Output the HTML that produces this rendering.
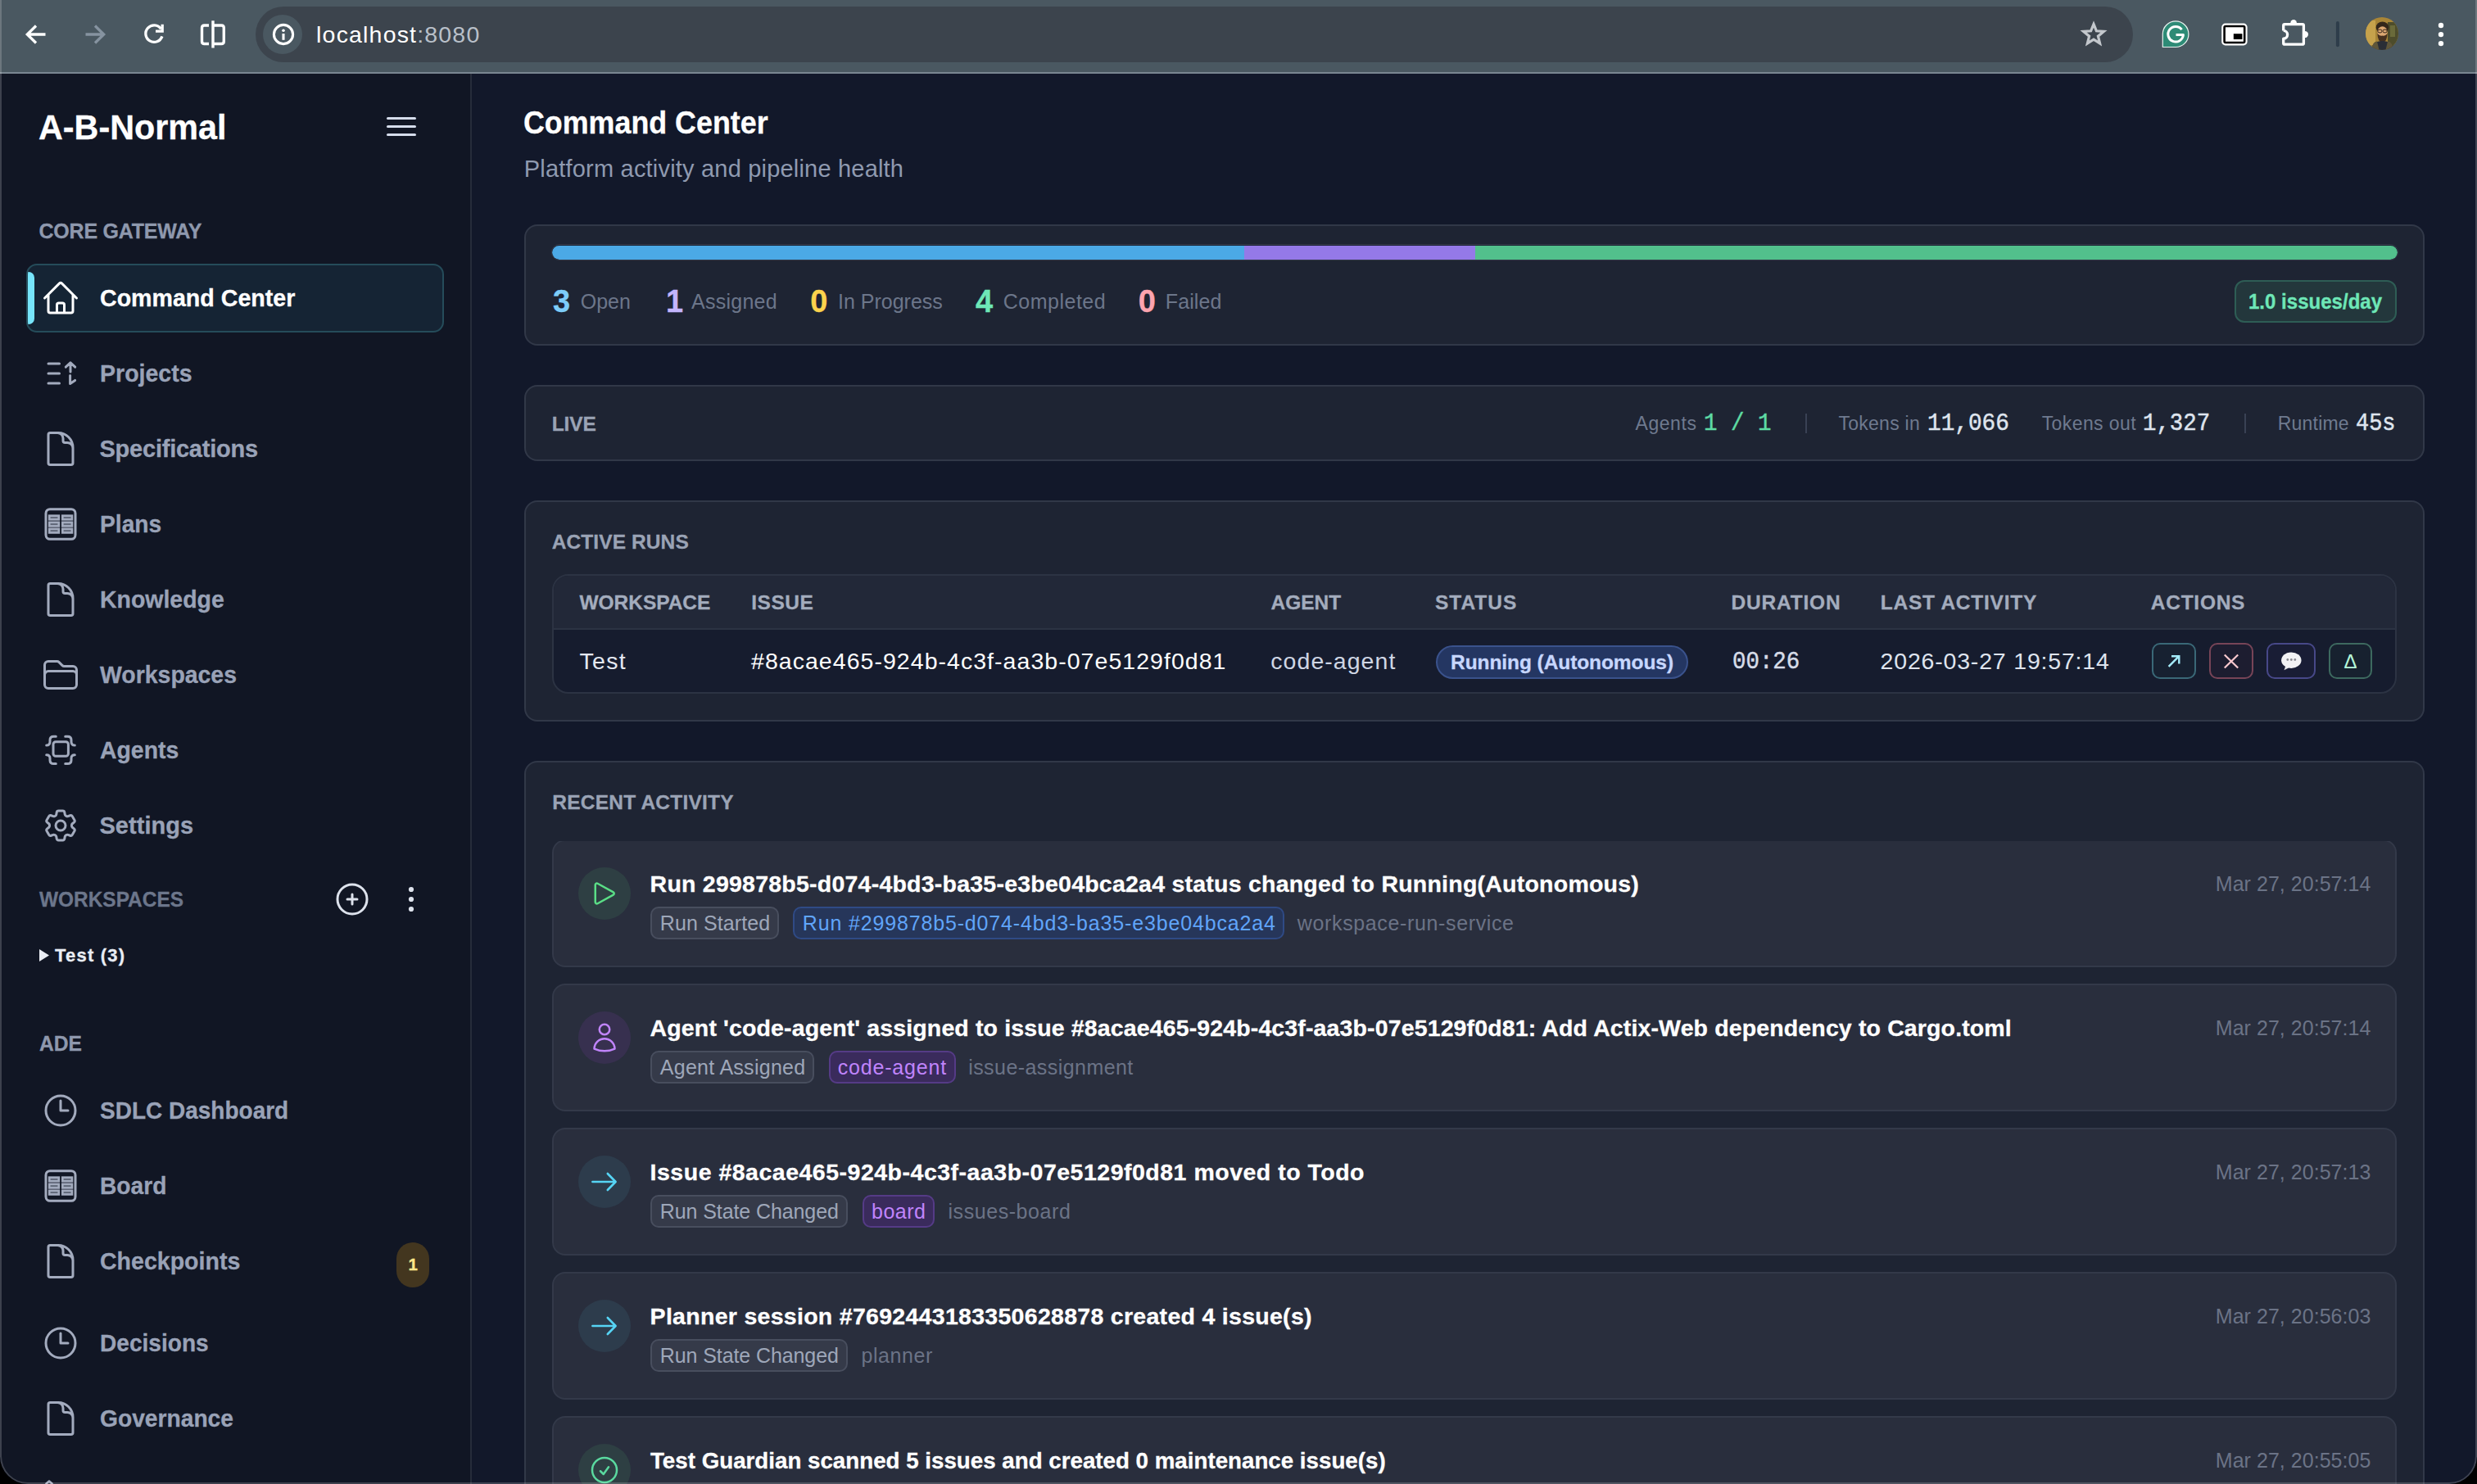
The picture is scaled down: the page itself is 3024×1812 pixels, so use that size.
<!DOCTYPE html>
<html><head><meta charset="utf-8"><title>Command Center</title>
<style>
*{box-sizing:border-box;margin:0;padding:0}
html,body{width:3024px;height:1812px;overflow:hidden;background:#000}
body{font-family:"Liberation Sans",sans-serif}
#w{position:absolute;left:0;top:0;width:3024px;height:1812px;overflow:hidden;background:#12182a;border-radius:0 0 34px 34px}
.a{position:absolute}
.t{position:absolute;white-space:pre;line-height:1}
.card{position:absolute;background:#1e2433;border:2px solid #313848;border-radius:16px}
.item{position:absolute;left:674px;width:2252px;height:156px;background:#292e3d;border:2px solid #333949;border-radius:16px}
.tag{position:absolute;height:40px;border-radius:10px;border:2px solid #484e5e;background:#353a49}
.ic{position:absolute;width:64px;height:64px;border-radius:32px}
svg{position:absolute;overflow:visible}
</style></head><body><div id="w">
<div class="a" style="left:0;top:0;width:3024px;height:88px;background:#4a5861"></div>
<div class="a" style="left:0;top:88px;width:3024px;height:2px;background:#7a8691"></div>
<div class="a" style="left:312px;top:8px;width:2292px;height:68px;border-radius:34px;background:#3c444d"></div>
<div class="a" style="left:321px;top:18px;width:48px;height:48px;border-radius:24px;background:#4a5861"></div>
<div class="a" style="left:0;top:90px;width:575px;height:1722px;background:#111624"></div>
<div class="a" style="left:574px;top:90px;width:2px;height:1722px;background:#262c3a"></div>
<div class="a" style="left:472px;top:142.5px;width:36px;height:3px;border-radius:2px;background:#d5dceb"></div>
<div class="a" style="left:472px;top:152.5px;width:36px;height:3px;border-radius:2px;background:#d5dceb"></div>
<div class="a" style="left:472px;top:163.0px;width:36px;height:3px;border-radius:2px;background:#d5dceb"></div>
<div class="a" style="left:32px;top:322px;width:510px;height:84px;border-radius:13px;background:#152434;border:2px solid #254c5a;overflow:hidden"><div class="a" style="left:0;top:8px;width:8px;height:64px;background:#76e4fa;border-radius:0 7px 7px 0"></div></div>
<svg style="left:48px;top:1159px" width="12" height="15"><path d="M0 0 L12 7.5 L0 15Z" fill="#e9edf4"/></svg>
<div class="a" style="left:484px;top:1516.5px;width:40px;height:55.5px;border-radius:20px;background:#43361f"></div>
<div class="card" style="left:640px;top:274px;width:2320px;height:148px"></div>
<div class="a" style="left:672.5px;top:298px;width:2255px;height:20px;border-radius:10px;background:#1a2030;overflow:hidden;border:1px solid #353a49"><div class="a" style="left:0;top:0.5px;width:2253px;height:17px;border-radius:8.5px;overflow:hidden"><div class="a" style="left:0;top:0;width:845.5px;height:17px;background:#4ba9e6"></div><div class="a" style="left:845.5px;top:0;width:281.5px;height:17px;background:#9479e8"></div><div class="a" style="left:1127px;top:0;width:1126px;height:17px;background:#52c08c"></div></div></div>
<div class="a" style="left:2728px;top:342px;width:198px;height:52px;border-radius:12px;background:#23373c;border:2px solid #2e5d55"></div>
<div class="card" style="left:640px;top:470px;width:2320px;height:93px"></div>
<div class="a" style="left:2203.5px;top:505px;width:2px;height:24px;background:#394154"></div>
<div class="a" style="left:2739.5px;top:505px;width:2px;height:24px;background:#394154"></div>
<div class="card" style="left:640px;top:611px;width:2320px;height:270px"></div>
<div class="a" style="left:674px;top:701px;width:2252px;height:146px;border-radius:20px;border:2px solid #2c3343;background:#161c2e;overflow:hidden"><div class="a" style="left:0;top:0;width:2252px;height:66px;background:#222838;border-bottom:2px solid #2c3343"></div></div>
<div class="a" style="left:1753px;top:787.5px;width:308px;height:41px;border-radius:20.5px;background:#243662;border:2px solid #3a528c"></div>
<div class="a" style="left:2627px;top:785px;width:54px;height:44px;border-radius:10px;border:2px solid #3a6877;background:#172131"></div>
<div class="a" style="left:2697px;top:785px;width:54px;height:44px;border-radius:10px;border:2px solid #774457;background:#1d1d30"></div>
<div class="a" style="left:2767px;top:785px;width:60px;height:44px;border-radius:10px;border:2px solid #474888;background:#191d35"></div>
<div class="a" style="left:2843px;top:785px;width:53px;height:44px;border-radius:10px;border:2px solid #3d695f;background:#17212f"></div>
<div class="card" style="left:640px;top:929px;width:2320px;height:1000px"></div>
<div class="item" style="top:1025.0px"></div>
<div class="ic" style="left:706px;top:1059.0px;background:#2e3f43"></div>
<div class="tag" style="left:794.4px;top:1107.3px;width:157.0px;background:#353a49;border-color:#484e5e"></div>
<div class="tag" style="left:968.4px;top:1107.3px;width:599.8px;background:#26365a;border-color:#2f4a85"></div>
<div class="a" style="left:674px;top:1020px;width:2252px;height:7px;background:#1e2433"></div>
<div class="item" style="top:1201.0px"></div>
<div class="ic" style="left:706px;top:1235.0px;background:#37304f"></div>
<div class="tag" style="left:794.4px;top:1283.3px;width:200.1px;background:#353a49;border-color:#484e5e"></div>
<div class="tag" style="left:1011.5px;top:1283.3px;width:155.0px;background:#3a2b5c;border-color:#553b86"></div>
<div class="item" style="top:1377.0px"></div>
<div class="ic" style="left:706px;top:1411.0px;background:#2d3c4c"></div>
<div class="tag" style="left:794.4px;top:1459.3px;width:240.8px;background:#353a49;border-color:#484e5e"></div>
<div class="tag" style="left:1052.7px;top:1459.3px;width:88.6px;background:#3a2b5c;border-color:#553b86"></div>
<div class="item" style="top:1553.0px"></div>
<div class="ic" style="left:706px;top:1587.0px;background:#2d3c4c"></div>
<div class="tag" style="left:794.4px;top:1635.3px;width:240.8px;background:#353a49;border-color:#484e5e"></div>
<div class="item" style="top:1729.0px"></div>
<div class="ic" style="left:706px;top:1763.0px;background:#2e3f43"></div>
<svg style="left:50.0px;top:340.0px" width="48" height="48" viewBox="0 0 24 24" fill="none" stroke="#ffffff" stroke-width="1.5" stroke-linecap="round" stroke-linejoin="round"><path d="m2.25 12 8.954-8.955c.44-.439 1.152-.439 1.591 0L21.75 12M4.5 9.75v10.125c0 .621.504 1.125 1.125 1.125H9.75v-4.875c0-.621.504-1.125 1.125-1.125h2.25c.621 0 1.125.504 1.125 1.125V21h4.125c.621 0 1.125-.504 1.125-1.125V9.75M8.25 21h8.25"/></svg>
<svg style="left:0;top:0" width="3024" height="1812" viewBox="0 0 3024 1812" fill="none" stroke-linecap="round" stroke-linejoin="round" ><path d="M59 444H72.5M59 456.1H72.5M59 468.1H72.5M86 454V443.3M80.3 448.2L86 442.8L91.7 448.2M85.6 458.5V468.6L91.6 464.4" stroke="#a3abbe" stroke-width="3"/></svg>
<svg style="left:50.0px;top:524.0px" width="48" height="48" viewBox="0 0 24 24" fill="none" stroke="#a3abbe" stroke-width="1.5" stroke-linecap="round" stroke-linejoin="round"><path d="M19.5 14.25v-2.625a3.375 3.375 0 0 0-3.375-3.375h-1.5A1.125 1.125 0 0 1 13.5 7.125v-1.5a3.375 3.375 0 0 0-3.375-3.375H8.25m2.25 0H5.625c-.621 0-1.125.504-1.125 1.125v17.25c0 .621.504 1.125 1.125 1.125h12.75c.621 0 1.125-.504 1.125-1.125V11.25a9 9 0 0 0-9-9Z"/></svg>
<svg style="left:0;top:0" width="3024" height="1812" viewBox="0 0 3024 1812" fill="none" stroke-linecap="round" stroke-linejoin="round" ><rect x="56" y="621.7" width="36" height="36.6" rx="5" stroke="#a3abbe" stroke-width="3"/><rect x="60.2" y="629.7" width="11.6" height="4.6" fill="#5f6677" stroke="#a3abbe" stroke-width="2.7" stroke-linejoin="miter"/><rect x="76.3" y="629.7" width="11.6" height="4.6" fill="#5f6677" stroke="#a3abbe" stroke-width="2.7" stroke-linejoin="miter"/><rect x="60.2" y="637.8" width="11.6" height="4.6" fill="#5f6677" stroke="#a3abbe" stroke-width="2.7" stroke-linejoin="miter"/><rect x="76.3" y="637.8" width="11.6" height="4.6" fill="#5f6677" stroke="#a3abbe" stroke-width="2.7" stroke-linejoin="miter"/><rect x="60.2" y="645.8" width="11.6" height="4.6" fill="#5f6677" stroke="#a3abbe" stroke-width="2.7" stroke-linejoin="miter"/><rect x="76.3" y="645.8" width="11.6" height="4.6" fill="#5f6677" stroke="#a3abbe" stroke-width="2.7" stroke-linejoin="miter"/></svg>
<svg style="left:50.0px;top:708.0px" width="48" height="48" viewBox="0 0 24 24" fill="none" stroke="#a3abbe" stroke-width="1.5" stroke-linecap="round" stroke-linejoin="round"><path d="M19.5 14.25v-2.625a3.375 3.375 0 0 0-3.375-3.375h-1.5A1.125 1.125 0 0 1 13.5 7.125v-1.5a3.375 3.375 0 0 0-3.375-3.375H8.25m2.25 0H5.625c-.621 0-1.125.504-1.125 1.125v17.25c0 .621.504 1.125 1.125 1.125h12.75c.621 0 1.125-.504 1.125-1.125V11.25a9 9 0 0 0-9-9Z"/></svg>
<svg style="left:50.0px;top:800.0px" width="48" height="48" viewBox="0 0 24 24" fill="none" stroke="#a3abbe" stroke-width="1.5" stroke-linecap="round" stroke-linejoin="round"><path d="M2.25 12.75V12A2.25 2.25 0 0 1 4.5 9.75h15A2.25 2.25 0 0 1 21.75 12v.75m-8.69-6.44-2.12-2.12a1.5 1.5 0 0 0-1.061-.44H4.5A2.25 2.25 0 0 0 2.25 6v12a2.25 2.25 0 0 0 2.25 2.25h15A2.25 2.25 0 0 0 21.75 18V9a2.25 2.25 0 0 0-2.25-2.25h-5.379a1.5 1.5 0 0 1-1.06-.44Z"/></svg>
<svg style="left:0;top:0" width="3024" height="1812" viewBox="0 0 3024 1812" fill="none" stroke-linecap="round" stroke-linejoin="round" ><g transform="translate(0 0.0)" stroke="#a3abbe" stroke-width="3"><rect x="65" y="905.7" width="18.4" height="17.5" rx="3"/><path d="M68.3 899.2H65.5Q61 899.2 61 903.5V905.7Q61 910 56.7 910M79.7 899.2H82.5Q87 899.2 87 903.5V905.7Q87 910 91.3 910M68.3 932.6H65.5Q61 932.6 61 928.3V926.1Q61 921.8 56.7 921.8M79.7 932.6H82.5Q87 932.6 87 928.3V926.1Q87 921.8 91.3 921.8"/></g></svg>
<svg style="left:50.0px;top:984.0px" width="48" height="48" viewBox="0 0 24 24" fill="none" stroke="#a3abbe" stroke-width="1.5" stroke-linecap="round" stroke-linejoin="round"><path d="M9.594 3.94c.09-.542.56-.94 1.11-.94h2.593c.55 0 1.02.398 1.11.94l.213 1.281c.063.374.313.686.645.87.074.04.147.083.22.127.325.196.72.257 1.075.124l1.217-.456a1.125 1.125 0 0 1 1.37.49l1.296 2.247a1.125 1.125 0 0 1-.26 1.431l-1.003.827c-.293.241-.438.613-.43.992a7.723 7.723 0 0 1 0 .255c-.008.378.137.75.43.991l1.004.827c.424.35.534.955.26 1.43l-1.298 2.247a1.125 1.125 0 0 1-1.369.491l-1.217-.456c-.355-.133-.75-.072-1.076.124a6.47 6.47 0 0 1-.22.128c-.331.183-.581.495-.644.869l-.213 1.281c-.09.543-.56.94-1.11.94h-2.594c-.55 0-1.019-.398-1.11-.94l-.213-1.281c-.062-.374-.312-.686-.644-.87a6.52 6.52 0 0 1-.22-.127c-.325-.196-.72-.257-1.076-.124l-1.217.456a1.125 1.125 0 0 1-1.369-.49l-1.297-2.247a1.125 1.125 0 0 1 .26-1.431l1.004-.827c.292-.24.437-.613.43-.991a6.932 6.932 0 0 1 0-.255c.007-.38-.138-.751-.43-.992l-1.004-.827a1.125 1.125 0 0 1-.26-1.43l1.297-2.247a1.125 1.125 0 0 1 1.37-.491l1.216.456c.356.133.751.072 1.076-.124.072-.044.146-.086.22-.128.332-.183.582-.495.644-.869l.214-1.28ZM15 12a3 3 0 1 1-6 0 3 3 0 0 1 6 0Z"/></svg>
<svg style="left:406.0px;top:1074.0px" width="48" height="48" viewBox="0 0 24 24" fill="none" stroke="#dde2ec" stroke-width="1.5" stroke-linecap="round" stroke-linejoin="round"><path d="M12 9v6m3-3H9m12 0a9 9 0 1 1-18 0 9 9 0 0 1 18 0Z"/></svg>
<svg style="left:0;top:0" width="3024" height="1812" viewBox="0 0 3024 1812" fill="none" stroke-linecap="round" stroke-linejoin="round" ><circle cx="502" cy="1086" r="3.1" fill="#dde2ec"/><circle cx="502" cy="1098" r="3.1" fill="#dde2ec"/><circle cx="502" cy="1110" r="3.1" fill="#dde2ec"/></svg>
<svg style="left:50.0px;top:1332.0px" width="48" height="48" viewBox="0 0 24 24" fill="none" stroke="#a3abbe" stroke-width="1.5" stroke-linecap="round" stroke-linejoin="round"><path d="M12 6v6h4.5m4.5 0a9 9 0 1 1-18 0 9 9 0 0 1 18 0Z"/></svg>
<svg style="left:0;top:0" width="3024" height="1812" viewBox="0 0 3024 1812" fill="none" stroke-linecap="round" stroke-linejoin="round" ><rect x="56" y="1429.7" width="36" height="36.6" rx="5" stroke="#a3abbe" stroke-width="3"/><rect x="60.2" y="1437.7" width="11.6" height="4.6" fill="#5f6677" stroke="#a3abbe" stroke-width="2.7" stroke-linejoin="miter"/><rect x="76.3" y="1437.7" width="11.6" height="4.6" fill="#5f6677" stroke="#a3abbe" stroke-width="2.7" stroke-linejoin="miter"/><rect x="60.2" y="1445.8" width="11.6" height="4.6" fill="#5f6677" stroke="#a3abbe" stroke-width="2.7" stroke-linejoin="miter"/><rect x="76.3" y="1445.8" width="11.6" height="4.6" fill="#5f6677" stroke="#a3abbe" stroke-width="2.7" stroke-linejoin="miter"/><rect x="60.2" y="1453.8" width="11.6" height="4.6" fill="#5f6677" stroke="#a3abbe" stroke-width="2.7" stroke-linejoin="miter"/><rect x="76.3" y="1453.8" width="11.6" height="4.6" fill="#5f6677" stroke="#a3abbe" stroke-width="2.7" stroke-linejoin="miter"/></svg>
<svg style="left:50.0px;top:1516.0px" width="48" height="48" viewBox="0 0 24 24" fill="none" stroke="#a3abbe" stroke-width="1.5" stroke-linecap="round" stroke-linejoin="round"><path d="M19.5 14.25v-2.625a3.375 3.375 0 0 0-3.375-3.375h-1.5A1.125 1.125 0 0 1 13.5 7.125v-1.5a3.375 3.375 0 0 0-3.375-3.375H8.25m2.25 0H5.625c-.621 0-1.125.504-1.125 1.125v17.25c0 .621.504 1.125 1.125 1.125h12.75c.621 0 1.125-.504 1.125-1.125V11.25a9 9 0 0 0-9-9Z"/></svg>
<svg style="left:50.0px;top:1616.0px" width="48" height="48" viewBox="0 0 24 24" fill="none" stroke="#a3abbe" stroke-width="1.5" stroke-linecap="round" stroke-linejoin="round"><path d="M12 6v6h4.5m4.5 0a9 9 0 1 1-18 0 9 9 0 0 1 18 0Z"/></svg>
<svg style="left:50.0px;top:1708.0px" width="48" height="48" viewBox="0 0 24 24" fill="none" stroke="#a3abbe" stroke-width="1.5" stroke-linecap="round" stroke-linejoin="round"><path d="M19.5 14.25v-2.625a3.375 3.375 0 0 0-3.375-3.375h-1.5A1.125 1.125 0 0 1 13.5 7.125v-1.5a3.375 3.375 0 0 0-3.375-3.375H8.25m2.25 0H5.625c-.621 0-1.125.504-1.125 1.125v17.25c0 .621.504 1.125 1.125 1.125h12.75c.621 0 1.125-.504 1.125-1.125V11.25a9 9 0 0 0-9-9Z"/></svg>
<svg style="left:0;top:0" width="3024" height="1812" viewBox="0 0 3024 1812" fill="none" stroke-linecap="round" stroke-linejoin="round" ><path d="M56.5 1811.5L60 1808.6L63.5 1811.5" stroke="#a3abbe" stroke-width="2.6"/></svg>
<svg style="left:717.7px;top:1071.0px" width="40" height="40" viewBox="0 0 24 24" fill="none" stroke="#5ade86" stroke-width="1.5" stroke-linecap="round" stroke-linejoin="round"><path d="M5.25 5.653c0-.856.917-1.398 1.667-.986l11.54 6.347a1.125 1.125 0 0 1 0 1.972l-11.54 6.347a1.125 1.125 0 0 1-1.667-.986V5.653Z"/></svg>
<svg style="left:717.7px;top:1247.0px" width="40" height="40" viewBox="0 0 24 24" fill="none" stroke="#c084fc" stroke-width="1.5" stroke-linecap="round" stroke-linejoin="round"><path d="M15.75 6a3.75 3.75 0 1 1-7.5 0 3.75 3.75 0 0 1 7.5 0ZM4.501 20.118a7.5 7.5 0 0 1 14.998 0A17.933 17.933 0 0 1 12 21.75c-2.676 0-5.216-.584-7.499-1.632Z"/></svg>
<svg style="left:0;top:0" width="3024" height="1812" viewBox="0 0 3024 1812" fill="none" stroke-linecap="round" stroke-linejoin="round" ><path d="M723.4 1443.0H751.4M741.8 1433.0L751.6 1443.0L741.8 1453.0" stroke="#56d4f4" stroke-width="2.6"/></svg>
<svg style="left:0;top:0" width="3024" height="1812" viewBox="0 0 3024 1812" fill="none" stroke-linecap="round" stroke-linejoin="round" ><path d="M723.4 1619.0H751.4M741.8 1609.0L751.6 1619.0L741.8 1629.0" stroke="#56d4f4" stroke-width="2.6"/></svg>
<svg style="left:717.7px;top:1775.0px" width="40" height="40" viewBox="0 0 24 24" fill="none" stroke="#5ad99f" stroke-width="1.5" stroke-linecap="round" stroke-linejoin="round"><path d="M9 12.75 11.25 15 15 9.75M21 12a9 9 0 1 1-18 0 9 9 0 0 1 18 0Z"/></svg>
<svg style="left:0;top:0" width="3024" height="1812" viewBox="0 0 3024 1812" fill="none" stroke-linecap="round" stroke-linejoin="round" ><path d="M2647.6 813.8L2660 801.4M2651 801.2H2660.3V810.5" stroke="#a5ecfb" stroke-width="2.4" stroke-linecap="butt" stroke-linejoin="miter"/></svg>
<svg style="left:0;top:0" width="3024" height="1812" viewBox="0 0 3024 1812" fill="none" stroke-linecap="round" stroke-linejoin="round" ><path d="M2715.8 799.5L2732.2 815.5M2732.2 799.5L2715.8 815.5" stroke="#fcc9cf" stroke-width="2.2" stroke-linecap="butt"/></svg>
<svg style="left:0;top:0" width="3024" height="1812" viewBox="0 0 3024 1812" fill="none" stroke-linecap="round" stroke-linejoin="round" ><path d="M2790.5 812.5L2788.5 818.2L2795.5 814.8Z" fill="#e8e8ea" stroke="none"/><ellipse cx="2797.3" cy="806.2" rx="12.2" ry="9.7" fill="#f2f2f4"/><circle cx="2792.8" cy="805.5" r="1.4" fill="#8a8a90"/><circle cx="2797.3" cy="805.5" r="1.4" fill="#8a8a90"/><circle cx="2801.8" cy="805.5" r="1.4" fill="#8a8a90"/></svg>
<svg style="left:0;top:0" width="3024" height="1812" viewBox="0 0 3024 1812" fill="none" stroke-linecap="round" stroke-linejoin="round" ><path d="M55.5 42H33.5M44 31.5L33.3 42L44 52.5" stroke="#ffffff" stroke-width="3.3" stroke-linecap="butt" stroke-linejoin="miter"/></svg>
<svg style="left:0;top:0" width="3024" height="1812" viewBox="0 0 3024 1812" fill="none" stroke-linecap="round" stroke-linejoin="round" ><path d="M104.5 42H126.5M116 31.5L126.7 42L116 52.5" stroke="#8693a0" stroke-width="3.3" stroke-linecap="butt" stroke-linejoin="miter"/></svg>
<svg style="left:0;top:0" width="3024" height="1812" viewBox="0 0 3024 1812" fill="none" stroke-linecap="round" stroke-linejoin="round" ><path d="M196.6 35.2A10.3 10.3 0 1 0 197.9 44.4" stroke="#ffffff" stroke-width="3.3" stroke-linecap="butt"/><path d="M198.2 29.8V38.1H190" stroke="#ffffff" stroke-width="3.3" stroke-linecap="butt" stroke-linejoin="miter"/></svg>
<svg style="left:0;top:0" width="3024" height="1812" viewBox="0 0 3024 1812" fill="none" stroke-linecap="round" stroke-linejoin="round" ><path d="M255 31H249.5Q246.5 31 246.5 34V50.5Q246.5 53.5 249.5 53.5H255M260 31H270.3Q273.3 31 273.3 34V50.5Q273.3 53.5 270.3 53.5H260M260 25.2V58.6" stroke="#ffffff" stroke-width="3.4" stroke-linecap="butt"/></svg>
<svg style="left:0;top:0" width="3024" height="1812" viewBox="0 0 3024 1812" fill="none" stroke-linecap="round" stroke-linejoin="round" ><circle cx="346" cy="42" r="11.6" stroke="#ffffff" stroke-width="3.1"/><circle cx="346" cy="37.3" r="1.8" fill="#ffffff"/><path d="M346 41V48.8" stroke="#ffffff" stroke-width="3.1" stroke-linecap="butt"/></svg>
<svg style="left:0;top:0" width="3024" height="1812" viewBox="0 0 3024 1812" fill="none" stroke-linecap="round" stroke-linejoin="round" ><polygon points="2556.0,29.4 2559.4,37.8 2568.4,38.4 2561.4,44.2 2563.6,52.9 2556.0,48.1 2548.4,52.9 2550.6,44.2 2543.6,38.4 2552.6,37.8" stroke="#c3c7cc" stroke-width="3.2" stroke-linejoin="miter"/></svg>
<svg style="left:0;top:0" width="3024" height="1812" viewBox="0 0 3024 1812" fill="none" stroke-linecap="round" stroke-linejoin="round" ><path d="M2640.3 41.7A15.8 15.8 0 1 1 2656.1 57.5H2640.3Z" fill="#2e8b76" stroke="#e9f3f0" stroke-width="1.2"/><path d="M2663.6 36.2A9.3 9.3 0 1 0 2665.4 42.6H2656.5" stroke="#ffffff" stroke-width="3" stroke-linecap="butt"/></svg>
<svg style="left:0;top:0" width="3024" height="1812" viewBox="0 0 3024 1812" fill="none" stroke-linecap="round" stroke-linejoin="round" ><rect x="2712.2" y="28.6" width="31.4" height="26.8" rx="4.5" fill="#ffffff"/><rect x="2715.6" y="32" width="24.6" height="20" rx="1.5" stroke="#000000" stroke-width="2.6" fill="#ffffff"/><rect x="2726.8" y="41.2" width="10.6" height="6.8" fill="#000000"/></svg>
<svg style="left:0;top:0" width="3024" height="1812" viewBox="0 0 3024 1812" fill="none" stroke-linecap="round" stroke-linejoin="round" ><path d="M2787.7 37.4V31.2Q2787.7 29.7 2789.2 29.7H2810.9Q2812.4 29.7 2812.4 31.2V52.7Q2812.4 54.2 2810.9 54.2H2789.2Q2787.7 54.2 2787.7 52.7V47.2A4.9 4.9 0 0 0 2787.7 37.4" stroke="#ffffff" stroke-width="3.3" stroke-linecap="butt"/><path d="M2796.2 28.4A3.9 4.4 0 0 1 2804 28.4Z" fill="#ffffff"/><path d="M2813.8 37.9A4.2 4.1 0 0 1 2813.8 46.1Z" fill="#ffffff"/></svg>
<svg style="left:0;top:0" width="3024" height="1812" viewBox="0 0 3024 1812" fill="none" stroke-linecap="round" stroke-linejoin="round" ><path d="M2853.9 28V55.3" stroke="#2e3d4a" stroke-width="4"/></svg>
<svg style="left:0;top:0" width="3024" height="1812" viewBox="0 0 3024 1812" fill="none" stroke-linecap="round" stroke-linejoin="round" ><circle cx="2980" cy="31" r="3.2" fill="#ffffff"/><circle cx="2980" cy="42.1" r="3.2" fill="#ffffff"/><circle cx="2980" cy="53.1" r="3.2" fill="#ffffff"/></svg>
<svg style="left:2887.9px;top:21.4px" width="40" height="40" viewBox="0 0 40 40"><defs><clipPath id="av"><circle cx="20" cy="20" r="20"/></clipPath></defs><g clip-path="url(#av)"><rect width="40" height="40" fill="#a88537"/><rect x="0" y="4" width="12" height="30" fill="#c6a24c"/><rect x="27" y="6" width="13" height="34" fill="#4d4c2b"/><rect x="30" y="10" width="6" height="14" fill="#6a6a3a"/><ellipse cx="20.5" cy="12.5" rx="7.8" ry="7" fill="#33261a"/><ellipse cx="20.5" cy="18.5" rx="6" ry="7.3" fill="#dca772"/><path d="M14.4 19.5Q14.6 30.5 20.5 30.5Q26.4 30.5 26.6 19.5Q25 23 20.5 22.6Q16 23 14.4 19.5Z" fill="#46301f"/><rect x="15" y="15.2" width="4.8" height="3.6" rx="1.3" fill="none" stroke="#2f2217" stroke-width="1"/><rect x="21.2" y="15.2" width="4.8" height="3.6" rx="1.3" fill="none" stroke="#2f2217" stroke-width="1"/><path d="M7 40Q8 29 20.5 29Q33 29 34 40Z" fill="#2a2e36"/><path d="M7 40Q8 30 14 29.5L16.5 40ZM34 40Q33 30 27 29.5L24.5 40Z" fill="#5f5639"/></g></svg>
<span class="t" style="left:46.6px;top:135.0px;font-size:42px;color:#ffffff;font-weight:700;-webkit-text-stroke:0.3px #ffffff;transform-origin:0 0;transform:scaleX(0.9835);">A-B-Normal</span>
<span class="t" style="left:47.5px;top:270.0px;font-size:25px;color:#8e98ad;font-weight:700;-webkit-text-stroke:0.3px #8e98ad;letter-spacing:-0.220px;">CORE GATEWAY</span>
<span class="t" style="left:121.5px;top:350.0px;font-size:29px;color:#ffffff;font-weight:700;-webkit-text-stroke:0.3px #ffffff;transform-origin:0 0;transform:scaleX(0.9859);">Command Center</span>
<span class="t" style="left:121.5px;top:442.0px;font-size:29px;color:#99a2b7;font-weight:700;-webkit-text-stroke:0.3px #99a2b7;transform-origin:0 0;transform:scaleX(0.9838);">Projects</span>
<span class="t" style="left:121.5px;top:534.0px;font-size:29px;color:#99a2b7;font-weight:700;-webkit-text-stroke:0.3px #99a2b7;letter-spacing:-0.233px;">Specifications</span>
<span class="t" style="left:121.5px;top:626.0px;font-size:29px;color:#99a2b7;font-weight:700;-webkit-text-stroke:0.3px #99a2b7;transform-origin:0 0;transform:scaleX(0.9719);">Plans</span>
<span class="t" style="left:121.5px;top:718.0px;font-size:29px;color:#99a2b7;font-weight:700;-webkit-text-stroke:0.3px #99a2b7;transform-origin:0 0;transform:scaleX(0.9814);">Knowledge</span>
<span class="t" style="left:121.5px;top:810.0px;font-size:29px;color:#99a2b7;font-weight:700;-webkit-text-stroke:0.3px #99a2b7;transform-origin:0 0;transform:scaleX(0.9804);">Workspaces</span>
<span class="t" style="left:121.5px;top:902.0px;font-size:29px;color:#99a2b7;font-weight:700;-webkit-text-stroke:0.3px #99a2b7;transform-origin:0 0;transform:scaleX(0.9797);">Agents</span>
<span class="t" style="left:121.5px;top:994.0px;font-size:29px;color:#99a2b7;font-weight:700;-webkit-text-stroke:0.3px #99a2b7;letter-spacing:0.028px;">Settings</span>
<span class="t" style="left:47.5px;top:1086.0px;font-size:25px;color:#6c768b;font-weight:700;-webkit-text-stroke:0.3px #6c768b;transform-origin:0 0;transform:scaleX(0.9772);">WORKSPACES</span>
<span class="t" style="left:67.1px;top:1156.0px;font-size:22px;color:#e9edf4;font-weight:700;-webkit-text-stroke:0.3px #e9edf4;letter-spacing:1.199px;">Test (3)</span>
<span class="t" style="left:47.5px;top:1262.0px;font-size:25px;color:#8e98ad;font-weight:700;-webkit-text-stroke:0.3px #8e98ad;transform-origin:0 0;transform:scaleX(0.9849);">ADE</span>
<span class="t" style="left:121.5px;top:1342.0px;font-size:29px;color:#99a2b7;font-weight:700;-webkit-text-stroke:0.3px #99a2b7;transform-origin:0 0;transform:scaleX(0.9653);">SDLC Dashboard</span>
<span class="t" style="left:121.5px;top:1434.0px;font-size:29px;color:#99a2b7;font-weight:700;-webkit-text-stroke:0.3px #99a2b7;transform-origin:0 0;transform:scaleX(0.9714);">Board</span>
<span class="t" style="left:121.5px;top:1526.0px;font-size:29px;color:#99a2b7;font-weight:700;-webkit-text-stroke:0.3px #99a2b7;transform-origin:0 0;transform:scaleX(0.9843);">Checkpoints</span>
<span class="t" style="left:121.5px;top:1626.0px;font-size:29px;color:#99a2b7;font-weight:700;-webkit-text-stroke:0.3px #99a2b7;transform-origin:0 0;transform:scaleX(0.9686);">Decisions</span>
<span class="t" style="left:121.5px;top:1718.0px;font-size:29px;color:#99a2b7;font-weight:700;-webkit-text-stroke:0.3px #99a2b7;transform-origin:0 0;transform:scaleX(0.9723);">Governance</span>
<span class="t" style="left:0.0px;top:1534.0px;font-size:20.5px;color:#fde68a;font-weight:700;-webkit-text-stroke:0.3px #fde68a;left:498.5px;">1</span>
<span class="t" style="left:639.4px;top:131.0px;font-size:38px;color:#ffffff;font-weight:700;-webkit-text-stroke:0.3px #ffffff;transform-origin:0 0;transform:scaleX(0.9428);">Command Center</span>
<span class="t" style="left:639.8px;top:192.0px;font-size:29px;color:#8f9ab0;letter-spacing:0.194px;">Platform activity and pipeline health</span>
<span class="t" style="left:0.0px;top:349.0px;font-size:38px;color:#7dcdf9;font-weight:700;-webkit-text-stroke:0.3px #7dcdf9;left:674.9px;">3</span>
<span class="t" style="left:708.8px;top:356.0px;font-size:25px;color:#6c768a;letter-spacing:-0.024px;">Open</span>
<span class="t" style="left:0.0px;top:349.0px;font-size:38px;color:#c4b5fd;font-weight:700;-webkit-text-stroke:0.3px #c4b5fd;left:813.0px;">1</span>
<span class="t" style="left:844.0px;top:356.0px;font-size:25px;color:#6c768a;letter-spacing:0.249px;">Assigned</span>
<span class="t" style="left:0.0px;top:349.0px;font-size:38px;color:#fcd34d;font-weight:700;-webkit-text-stroke:0.3px #fcd34d;left:989.3px;">0</span>
<span class="t" style="left:1023.0px;top:356.0px;font-size:25px;color:#6c768a;">In Progress</span>
<span class="t" style="left:0.0px;top:349.0px;font-size:38px;color:#6ee7b7;font-weight:700;-webkit-text-stroke:0.3px #6ee7b7;left:1190.9px;">4</span>
<span class="t" style="left:1224.7px;top:356.0px;font-size:25px;color:#6c768a;letter-spacing:0.512px;">Completed</span>
<span class="t" style="left:0.0px;top:349.0px;font-size:38px;color:#fda4af;font-weight:700;-webkit-text-stroke:0.3px #fda4af;left:1389.7px;">0</span>
<span class="t" style="left:1422.8px;top:356.0px;font-size:25px;color:#6c768a;letter-spacing:0.101px;">Failed</span>
<span class="t" style="left:2745.4px;top:356.0px;font-size:25px;color:#6ee7b7;font-weight:700;-webkit-text-stroke:0.3px #6ee7b7;transform-origin:0 0;transform:scaleX(0.9619);">1.0 issues/day</span>
<span class="t" style="left:673.7px;top:506.0px;font-size:24.5px;color:#9aa3b5;font-weight:700;-webkit-text-stroke:0.3px #9aa3b5;letter-spacing:-0.106px;">LIVE</span>
<span class="t" style="left:1996.5px;top:506.0px;font-size:23px;color:#6f7a8f;letter-spacing:0.558px;">Agents</span>
<span class="t" style="left:2079.7px;top:502.0px;font-size:30px;color:#5edba3;font-family:'Liberation Mono', monospace;-webkit-text-stroke:0.5px #5edba3;transform-origin:0 0;transform:scaleX(0.9165);">1 / 1</span>
<span class="t" style="left:2244.5px;top:506.0px;font-size:23px;color:#6f7a8f;letter-spacing:0.254px;">Tokens in</span>
<span class="t" style="left:2352.5px;top:502.0px;font-size:30px;color:#dfe4ee;font-family:'Liberation Mono', monospace;-webkit-text-stroke:0.5px #dfe4ee;transform-origin:0 0;transform:scaleX(0.9238);">11,066</span>
<span class="t" style="left:2492.7px;top:506.0px;font-size:23px;color:#6f7a8f;letter-spacing:0.406px;">Tokens out</span>
<span class="t" style="left:2616.3px;top:502.0px;font-size:30px;color:#dfe4ee;font-family:'Liberation Mono', monospace;-webkit-text-stroke:0.5px #dfe4ee;transform-origin:0 0;transform:scaleX(0.9121);">1,327</span>
<span class="t" style="left:2780.8px;top:506.0px;font-size:23px;color:#6f7a8f;letter-spacing:0.191px;">Runtime</span>
<span class="t" style="left:2876.2px;top:502.0px;font-size:30px;color:#dfe4ee;font-family:'Liberation Mono', monospace;-webkit-text-stroke:0.5px #dfe4ee;transform-origin:0 0;transform:scaleX(0.8979);">45s</span>
<span class="t" style="left:673.7px;top:650.0px;font-size:24.5px;color:#9aa3b5;font-weight:700;-webkit-text-stroke:0.3px #9aa3b5;letter-spacing:0.097px;">ACTIVE RUNS</span>
<span class="t" style="left:707.5px;top:724.0px;font-size:24.5px;color:#a3acbd;font-weight:700;-webkit-text-stroke:0.3px #a3acbd;letter-spacing:-0.040px;">WORKSPACE</span>
<span class="t" style="left:917.2px;top:724.0px;font-size:24.5px;color:#a3acbd;font-weight:700;-webkit-text-stroke:0.3px #a3acbd;letter-spacing:0.530px;">ISSUE</span>
<span class="t" style="left:1551.5px;top:724.0px;font-size:24.5px;color:#a3acbd;font-weight:700;-webkit-text-stroke:0.3px #a3acbd;">AGENT</span>
<span class="t" style="left:1752.0px;top:724.0px;font-size:24.5px;color:#a3acbd;font-weight:700;-webkit-text-stroke:0.3px #a3acbd;letter-spacing:0.975px;">STATUS</span>
<span class="t" style="left:2113.6px;top:724.0px;font-size:24.5px;color:#a3acbd;font-weight:700;-webkit-text-stroke:0.3px #a3acbd;letter-spacing:0.795px;">DURATION</span>
<span class="t" style="left:2295.8px;top:724.0px;font-size:24.5px;color:#a3acbd;font-weight:700;-webkit-text-stroke:0.3px #a3acbd;letter-spacing:0.747px;">LAST ACTIVITY</span>
<span class="t" style="left:2625.8px;top:724.0px;font-size:24.5px;color:#a3acbd;font-weight:700;-webkit-text-stroke:0.3px #a3acbd;letter-spacing:0.733px;">ACTIONS</span>
<span class="t" style="left:707.6px;top:793.0px;font-size:28.5px;color:#e4e8f1;letter-spacing:1.256px;">Test</span>
<span class="t" style="left:917.0px;top:793.0px;font-size:28.5px;color:#ffffff;letter-spacing:1.041px;">#8acae465-924b-4c3f-aa3b-07e5129f0d81</span>
<span class="t" style="left:1551.3px;top:793.0px;font-size:28.5px;color:#cfd6e4;letter-spacing:1.047px;">code-agent</span>
<span class="t" style="left:1771.1px;top:797.0px;font-size:24.5px;color:#c7d7fe;font-weight:700;-webkit-text-stroke:0.3px #c7d7fe;letter-spacing:-0.082px;">Running (Autonomous)</span>
<span class="t" style="left:2115.0px;top:793.0px;font-size:30px;color:#d6dce8;font-family:'Liberation Mono', monospace;-webkit-text-stroke:0.5px #d6dce8;transform-origin:0 0;transform:scaleX(0.9132);">00:26</span>
<span class="t" style="left:2295.6px;top:793.0px;font-size:28.5px;color:#dfe4ee;letter-spacing:0.811px;">2026-03-27 19:57:14</span>
<span class="t" style="left:674.3px;top:968.0px;font-size:24.5px;color:#9aa3b5;font-weight:700;-webkit-text-stroke:0.3px #9aa3b5;letter-spacing:0.214px;">RECENT ACTIVITY</span>
<span class="t" style="left:793.6px;top:1065.0px;font-size:28.5px;color:#ffffff;font-weight:700;-webkit-text-stroke:0.3px #ffffff;letter-spacing:0.232px;">Run 299878b5-d074-4bd3-ba35-e3be04bca2a4 status changed to Running(Autonomous)</span>
<span class="t" style="left:2704.8px;top:1067.0px;font-size:25px;color:#6b7386;letter-spacing:0.039px;">Mar 27, 20:57:14</span>
<span class="t" style="left:805.8px;top:1115.0px;font-size:25px;color:#9ea7b9;letter-spacing:0.088px;">Run Started</span>
<span class="t" style="left:979.8px;top:1115.0px;font-size:25px;color:#60a5fa;letter-spacing:0.839px;">Run #299878b5-d074-4bd3-ba35-e3be04bca2a4</span>
<span class="t" style="left:1583.8px;top:1115.0px;font-size:25px;color:#6b7386;letter-spacing:0.637px;">workspace-run-service</span>
<span class="t" style="left:793.6px;top:1241.0px;font-size:28.5px;color:#ffffff;font-weight:700;-webkit-text-stroke:0.3px #ffffff;letter-spacing:0.134px;">Agent &#x27;code-agent&#x27; assigned to issue #8acae465-924b-4c3f-aa3b-07e5129f0d81: Add Actix-Web dependency to Cargo.toml</span>
<span class="t" style="left:2704.8px;top:1243.0px;font-size:25px;color:#6b7386;letter-spacing:0.039px;">Mar 27, 20:57:14</span>
<span class="t" style="left:805.8px;top:1291.0px;font-size:25px;color:#9ea7b9;letter-spacing:0.281px;">Agent Assigned</span>
<span class="t" style="left:1022.8px;top:1291.0px;font-size:25px;color:#c084fc;letter-spacing:0.799px;">code-agent</span>
<span class="t" style="left:1182.2px;top:1291.0px;font-size:25px;color:#6b7386;letter-spacing:0.438px;">issue-assignment</span>
<span class="t" style="left:793.6px;top:1417.0px;font-size:28.5px;color:#ffffff;font-weight:700;-webkit-text-stroke:0.3px #ffffff;letter-spacing:0.502px;">Issue #8acae465-924b-4c3f-aa3b-07e5129f0d81 moved to Todo</span>
<span class="t" style="left:2704.8px;top:1419.0px;font-size:25px;color:#6b7386;letter-spacing:0.039px;">Mar 27, 20:57:13</span>
<span class="t" style="left:805.8px;top:1467.0px;font-size:25px;color:#9ea7b9;letter-spacing:-0.094px;">Run State Changed</span>
<span class="t" style="left:1064.0px;top:1467.0px;font-size:25px;color:#c084fc;letter-spacing:0.487px;">board</span>
<span class="t" style="left:1157.5px;top:1467.0px;font-size:25px;color:#6b7386;letter-spacing:0.560px;">issues-board</span>
<span class="t" style="left:793.6px;top:1593.0px;font-size:28.5px;color:#ffffff;font-weight:700;-webkit-text-stroke:0.3px #ffffff;letter-spacing:0.291px;">Planner session #7692443183350628878 created 4 issue(s)</span>
<span class="t" style="left:2704.8px;top:1595.0px;font-size:25px;color:#6b7386;letter-spacing:0.039px;">Mar 27, 20:56:03</span>
<span class="t" style="left:805.8px;top:1643.0px;font-size:25px;color:#9ea7b9;letter-spacing:-0.094px;">Run State Changed</span>
<span class="t" style="left:1051.5px;top:1643.0px;font-size:25px;color:#6b7386;letter-spacing:0.566px;">planner</span>
<span class="t" style="left:793.6px;top:1769.0px;font-size:28.5px;color:#ffffff;font-weight:700;-webkit-text-stroke:0.3px #ffffff;transform-origin:0 0;transform:scaleX(0.9726);">Test Guardian scanned 5 issues and created 0 maintenance issue(s)</span>
<span class="t" style="left:2704.8px;top:1771.0px;font-size:25px;color:#6b7386;letter-spacing:0.039px;">Mar 27, 20:55:05</span>
<span class="t" style="left:0.0px;top:796.0px;font-size:24px;color:#b4f5d8;left:2861.5px;">Δ</span>
<span class="t" style="left:386.1px;top:28.0px;font-size:28.5px;color:#ffffff;letter-spacing:1.180px;">localhost<span style="color:#b9c0c9">:8080</span></span>
<div class="a" style="left:0;top:-4px;width:3024px;height:1816px;border:2px solid rgba(255,255,255,0.19);border-radius:0 0 34px 34px"></div>
</div></body></html>
